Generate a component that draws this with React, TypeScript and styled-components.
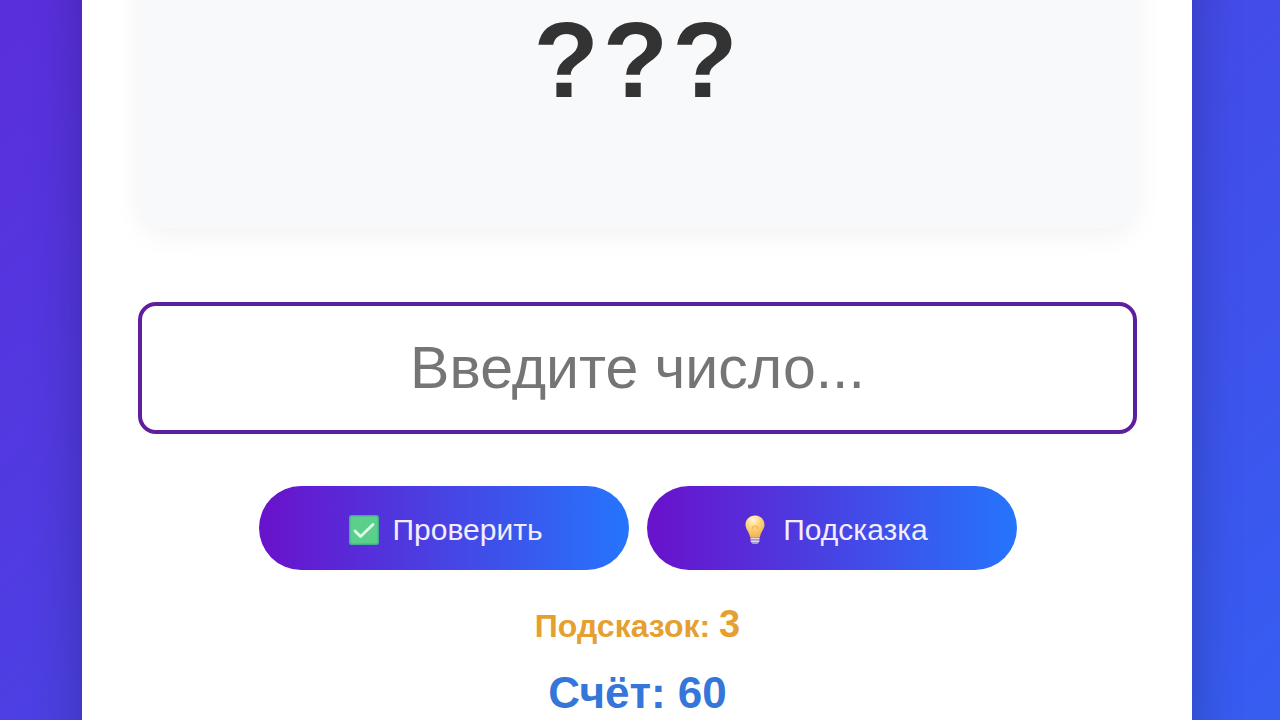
import React, { useState } from 'react';
import styled, { createGlobalStyle } from 'styled-components';

const GlobalStyle = createGlobalStyle`
  * {
    box-sizing: border-box;
  }

  body {
    margin: 0;
    font-family: 'Liberation Sans', Arial, sans-serif;
  }
`;

const Page = styled.div`
  min-height: 100vh;
  padding: 0 88px 0 82px;
  overflow: hidden;
  background: linear-gradient(135deg, #5a2edb 0%, #365df1 100%);
`;

const Card = styled.main`
  display: flex;
  flex-direction: column;
  min-height: calc(100vh + 160px);
  margin: -80px 0;
  padding: 0 55px 80px 56px;
  background: #fff;
  box-shadow: 0 16px 48px rgba(0, 0, 0, 0.24);
`;

const NumberPanel = styled.section`
  height: 308px;
  margin-bottom: 74px;
  padding-top: 80px;
  border-radius: 28px;
  background: #f8f9fb;
  box-shadow: 0 8px 28px rgba(0, 0, 0, 0.05);
  color: #333;
  font-size: 107px;
  font-weight: 700;
  line-height: 120px;
  letter-spacing: 4px;
  text-align: center;
`;

const AnswerInput = styled.input`
  width: 100%;
  height: 132px;
  padding: 0 28px;
  border: 4px solid #5f1f9c;
  border-radius: 18px;
  outline: none;
  background: #fff;
  color: #333;
  font-family: inherit;
  font-size: 59px;
  text-align: center;

  &::placeholder {
    color: #757575;
    opacity: 1;
  }
`;

const Actions = styled.div`
  display: flex;
  justify-content: center;
  gap: 18px;
  margin: 52px 0 32px;
`;

const ActionButton = styled.button`
  display: flex;
  align-items: center;
  justify-content: center;
  gap: 12px;
  width: 370px;
  height: 84px;
  padding: 4px 0 0 4px;
  border: 0;
  border-radius: 42px;
  background: linear-gradient(to right, #6a11cb, #2575fc);
  color: #f3edff;
  font-family: inherit;
  font-size: 30px;
  cursor: pointer;
`;

const Icon = styled.svg`
  width: 32px;
  height: 32px;
`;

const HintCount = styled.p`
  margin: 0 0 21px;
  color: #e5a02f;
  font-size: 32px;
  font-weight: 700;
  line-height: 44px;
  text-align: center;
`;

const Count = styled.span`
  font-size: 38px;
`;

const Score = styled.p`
  margin: 0;
  color: #3476d9;
  font-size: 44px;
  font-weight: 700;
  line-height: 48px;
  text-align: center;
`;

const CheckIcon = () => (
  <Icon viewBox="0 0 32 32" aria-hidden="true">
    <rect x="1" y="1" width="30" height="30" rx="2.5" fill="#46ad91" />
    <rect x="2.5" y="2.5" width="27" height="27" rx="1.5" fill="#5ad08a" />
    <path d="M7 17l5.500 5.500L25 10.500" fill="none" stroke="#e2fcee" strokeWidth="2.8" strokeLinecap="round" strokeLinejoin="round" />
  </Icon>
);

const BulbIcon = () => (
  <Icon viewBox="0 0 32 32" aria-hidden="true">
    <defs>
      <radialGradient id="bulb" cx="0.4" cy="0.2" r="0.8">
        <stop offset="0" stopColor="#fff6dc" />
        <stop offset="0.45" stopColor="#fbd780" />
        <stop offset="1" stopColor="#f5b155" />
      </radialGradient>
    </defs>
    <path d="M16 1.5C10.6 1.5 6.5 5.5 6.5 10.7c0 4.6 3.7 6.7 4.5 12.3h10c.8-5.6 4.5-7.7 4.5-12.3 0-5.2-4.1-9.2-9.5-9.2z" fill="url(#bulb)" />
    <path d="M13.5 15c-1-4 6-4 5 0" fill="none" stroke="#f2b055" strokeWidth="1.2" />
    <path d="M11.5 23h9v4.5l-2 2.5h-5l-2-2.5z" fill="#a99ccc" />
    <path d="M11.5 24.5h9M12 27.3h8" stroke="#ddd5ee" strokeWidth="1.2" />
  </Icon>
);

export default function App() {
  const [answer, setAnswer] = useState('');

  return (
    <>
      <GlobalStyle />
      <Page>
        <Card>
          <NumberPanel>???</NumberPanel>
          <AnswerInput
            type="text"
            inputMode="numeric"
            aria-label="Введите число"
            placeholder="Введите число..."
            value={answer}
            onChange={(event) => setAnswer(event.target.value)}
          />
          <Actions>
            <ActionButton type="button">
              <CheckIcon />
              Проверить
            </ActionButton>
            <ActionButton type="button">
              <BulbIcon />
              Подсказка
            </ActionButton>
          </Actions>
          <HintCount>
            Подсказок: <Count>3</Count>
          </HintCount>
          <Score>Счёт: 60</Score>
        </Card>
      </Page>
    </>
  );
}
